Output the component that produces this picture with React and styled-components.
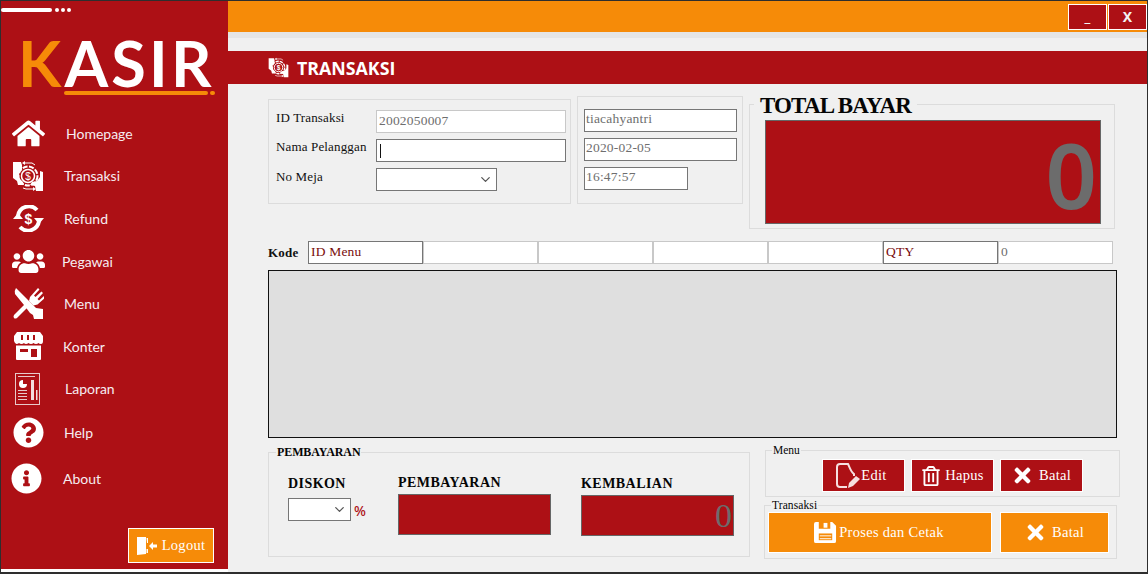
import styled, { createGlobalStyle } from "styled-components";
import { FaHome, FaUsers, FaQuestionCircle, FaInfoCircle, FaTimes, FaRegTrashAlt } from "react-icons/fa";
import { FiChevronDown } from "react-icons/fi";

const RED = "#ad1015";
const ORANGE = "#f68b08";
const SERIF = `"Liberation Serif", serif`;

const GlobalStyle = createGlobalStyle`
  html, body { margin: 0; padding: 0; background: #2e2e2e; }
  * { box-sizing: border-box; }
  input:focus { outline: none; }
`;

const Frame = styled.div`
  width: 1148px;
  height: 574px;
  padding: 1px 1px 2px 1px;
  display: flex;
  background: #2e2e2e;
  overflow: hidden;
  font-family: ${SERIF};
`;

const Sidebar = styled.aside`
  width: 227px;
  flex: none;
  background: #fff;
`;

const SideInner = styled.div`
  height: 568px;
  background: ${RED};
  display: flex;
  flex-direction: column;
`;

const Dots = styled.div`
  display: flex;
  align-items: center;
  gap: 2px;
  height: 4px;
  margin-top: 7px;
  i {
    display: block;
    width: 4px;
    height: 4px;
    border-radius: 50%;
    background: #fff;
  }
  b {
    display: block;
    width: 51px;
    height: 4px;
    border-radius: 2px;
    background: #fff;
    margin-right: 1px;
  }
`;

const Logo = styled.div`
  margin: 20px 0 0 17px;
  height: 58px;
  font-family: Lato, sans-serif;
  font-size: 63px;
  line-height: 62px;
  font-weight: 700;
  color: #fff;
  letter-spacing: 3.2px;
  white-space: nowrap;
  span {
    color: ${ORANGE};
  }
`;

const LogoRule = styled.div`
  display: flex;
  align-items: center;
  gap: 2px;
  margin-left: 63px;
  height: 5px;
  u {
    display: block;
    width: 144px;
    height: 4px;
    border-radius: 2px;
    background: ${ORANGE};
  }
  i {
    display: block;
    width: 5px;
    height: 4px;
    border-radius: 2px;
    background: ${ORANGE};
  }
`;

const Nav = styled.nav`
  margin-top: 17px;
  display: flex;
  flex-direction: column;
`;

const NavItem = styled.div`
  height: ${(p) => p.$h}px;
  display: flex;
  align-items: center;
  color: #f6ecf1;
  font-family: Lato, sans-serif;
  font-size: 14px;
  white-space: nowrap;
`;

const NavLabel = styled.span`
  margin-left: ${(p) => p.$gap}px;
`;

const NavIcon = styled.div`
  width: ${(p) => p.$w}px;
  margin-left: 9px;
  flex: none;
  display: flex;
  justify-content: center;
  svg {
    display: block;
  }
`;

const LogoutButton = styled.button`
  align-self: flex-end;
  margin: auto 14px 6px 0;
  width: 86px;
  height: 35px;
  background: ${ORANGE};
  border: 1px solid #fff;
  color: #fff;
  font-family: ${SERIF};
  font-size: 14.5px;
  letter-spacing: 0.3px;
  display: flex;
  align-items: center;
  justify-content: center;
  gap: 5px;
  padding: 0;
`;

const Main = styled.main`
  flex: 1;
  background: #f0f0f0;
  display: flex;
  flex-direction: column;
`;

const TopBar = styled.div`
  height: 31px;
  background: ${ORANGE};
  display: flex;
  justify-content: flex-end;
  gap: 1px;
  padding-top: 3px;
`;

const WinButton = styled.button`
  width: 39px;
  height: 26px;
  background: ${RED};
  border: 1px solid #fff;
  color: #f3f3f3;
  font-family: "Noto Sans", sans-serif;
  font-weight: 700;
  font-size: 14px;
  line-height: 22px;
  padding: 0;
`;

const Shade = styled.div`
  height: 6px;
  background: #e5e5e5;
`;

const Header = styled.header`
  margin-top: 13px;
  height: 33px;
  background: ${RED};
  color: #fff;
  font-family: "Open Sans", sans-serif;
  font-weight: 700;
  font-size: 17.8px;
  display: flex;
  align-items: center;
  padding-left: 40px;
  gap: 8px;
`;

const Content = styled.div`
  padding: 12px 0 0 40px;
  display: flex;
  flex-direction: column;
`;

const TopRow = styled.section`
  height: 133px;
  display: flex;
  align-items: flex-start;
  gap: 6px;
`;

const Panel = styled.div`
  width: ${(p) => p.$w}px;
  height: ${(p) => p.$h}px;
  margin-top: ${(p) => p.$top || 0}px;
  border: 1px solid #dcdcdc;
  padding: ${(p) => p.$pad};
  display: flex;
  flex-direction: column;
  gap: 6px;
`;

const FormRow = styled.div`
  display: flex;
  align-items: flex-start;
  height: 23px;
`;

const Label = styled.label`
  width: 100px;
  flex: none;
  font-size: 13px;
  letter-spacing: 0.15px;
  line-height: 15px;
  color: #111;
  margin-top: ${(p) => p.$top || 0}px;
  white-space: nowrap;
`;

const Field = styled.input`
  display: block;
  flex: none;
  width: ${(p) => p.$w}px;
  height: 23px;
  background: #fff;
  border: 1px solid ${(p) => (p.$soft ? "#c8c8c8" : "#767676")};
  border-radius: 0;
  font-family: ${SERIF};
  font-size: 13.5px;
  letter-spacing: 0.2px;
  color: ${(p) => p.$color || "#6e6e6e"};
  padding: 0 0 ${(p) => p.$lift ?? 3}px ${(p) => p.$left || 2}px;
`;

const CaretField = styled(Field)`
  background: linear-gradient(#111, #111) no-repeat 3px 4px / 1px 14px #fff;
`;

const SelectBox = styled.div`
  width: ${(p) => p.$w}px;
  height: 23px;
  flex: none;
  background: #fff;
  border: 1px solid #767676;
  display: flex;
  align-items: center;
  justify-content: flex-end;
  padding-right: 3px;
  color: #555;
`;

const Group = styled.fieldset`
  margin: ${(p) => p.$margin || 0};
  width: ${(p) => p.$w}px;
  height: ${(p) => p.$h}px;
  min-width: 0;
  border: 1px solid #dcdcdc;
  padding: ${(p) => p.$pad || 0};
  flex: none;
`;

const GroupTitle = styled.legend`
  position: relative;
  top: ${(p) => p.$drop || 0}px;
  font-size: ${(p) => p.$size}px;
  font-weight: ${(p) => p.$weight || 700};
  line-height: ${(p) => p.$line}px;
  color: #050505;
  margin-left: ${(p) => p.$left}px;
  padding: 0 ${(p) => p.$gap || 0}px;
  letter-spacing: ${(p) => p.$track || 0}px;
  white-space: nowrap;
`;

const TotalDisplay = styled.output`
  display: flex;
  justify-content: flex-end;
  align-items: center;
  width: 336px;
  height: 104px;
  background: ${RED};
  border: 1px solid #666;
  color: #6c6c6c;
  font-family: "Noto Sans", sans-serif;
  font-weight: 600;
  font-size: 90px;
  line-height: 100px;
  padding: 4px 3px 0 0;
`;

const CodeRow = styled.section`
  margin-top: 12px;
  height: 23px;
  display: flex;
  align-items: center;
`;

const CodeLabel = styled.label`
  width: 40px;
  flex: none;
  font-weight: 700;
  font-size: 13px;
  letter-spacing: 0.2px;
  color: #111;
`;

const TableBox = styled.div`
  margin-top: 6px;
  width: 849px;
  height: 168px;
  background: #dfdfdf;
  border: 1px solid #111;
`;

const BottomRow = styled.section`
  margin-top: 7px;
  display: flex;
  gap: 15px;
`;

const PayColumns = styled.div`
  display: flex;
`;

const PayColumn = styled.div`
  width: ${(p) => p.$w}px;
  flex: none;
  display: flex;
  flex-direction: column;
`;

const PayLabel = styled.div`
  height: 16px;
  font-size: 14px;
  font-weight: 700;
  letter-spacing: 0.45px;
  line-height: 16px;
  color: #050505;
  margin-top: ${(p) => p.$top || 0}px;
  white-space: nowrap;
`;

const DiscountRow = styled.div`
  margin-top: 6px;
  display: flex;
  align-items: center;
  gap: 3px;
`;

const Percent = styled.span`
  color: ${RED};
  font-family: "Noto Sans", sans-serif;
  font-size: 14px;
  font-weight: 500;
  position: relative;
  top: 1px;
`;

const PayBox = styled.output`
  display: flex;
  justify-content: flex-end;
  align-items: center;
  margin-top: 3px;
  width: 153px;
  height: 41px;
  background: ${RED};
  border: 1px solid #666;
  color: #6c6c6c;
  font-family: ${SERIF};
  font-size: 34px;
  padding-right: 1px;
`;

const SideGroups = styled.div`
  display: flex;
  flex-direction: column;
`;

const ButtonRow = styled.div`
  display: flex;
  gap: ${(p) => p.$gap}px;
`;

const ActionButton = styled.button`
  width: ${(p) => p.$w}px;
  height: ${(p) => p.$h}px;
  background: ${(p) => (p.$orange ? ORANGE : RED)};
  border: 1px solid #fff;
  color: #fff;
  font-family: ${SERIF};
  font-size: 14.5px;
  letter-spacing: 0.3px;
  display: flex;
  align-items: center;
  justify-content: center;
  gap: ${(p) => p.$iconGap || 3}px;
  padding: 0 ${(p) => p.$shift || 0}px 0 0;
  svg {
    flex: none;
  }
`;

const TransferIcon = ({ size = 32 }) => (
  <svg width={size} height={size} viewBox="0 0 32 32" fill="none">
    <path d="M1 2h8l1 3v4l-3 4v5l4 4 1 3H6l-1-4-4-3z" fill="#fff" />
    <path d="M31 31h-7l-1-5-5-1 2-3 5-1 3-4v-6l3 1z" fill="#fff" />
    <circle cx="16" cy="16" r="9.500" stroke="#fff" strokeWidth="2" strokeDasharray="5 1.500" />
    <circle cx="16" cy="16" r="6.500" stroke="#fff" strokeWidth="1.500" />
    <text x="16" y="19.500" textAnchor="middle" fontFamily="Liberation Sans" fontSize="10" fill="#fff">$</text>
    <path d="M12 3h8l3 2M21 29h-7l-3-1" stroke="#fff" strokeWidth="1" />
    <path d="M13 1v4l-3-2zM21 31v-4l3 2z" fill="#fff" />
  </svg>
);

const RefundIcon = () => (
  <svg width="31" height="27" viewBox="0 0 31 27" fill="none">
    <path d="M5 11a11 11 0 0 1 19-6" stroke="#fff" strokeWidth="4" />
    <path d="M26 16a11 11 0 0 1-19 6" stroke="#fff" strokeWidth="4" />
    <path d="M0 14l5-6 5 6zM31 13l-5 6-5-6z" fill="#fff" />
    <text x="15.500" y="18.500" textAnchor="middle" fontFamily="Liberation Sans" fontWeight="700" fontSize="14" fill="#fff">$</text>
  </svg>
);

const CutleryIcon = () => (
  <svg width="31" height="31" viewBox="0 0 31 31" fill="#fff">
    <path d="M3 0l20 20 7 1v10h-9l-1-4-3-2-6-8-9-11q-1-3 1-6z" />
    <path d="M1 27l12-12 3 3L4 30q-2 1-3 0-1-1 0-3z" />
    <path d="M16 13l1-4 8-9 1.500 1.500-5.500 6 1.500 1.500 6-5.500 1.500 1.500-5.500 6 1.500 1.500 6-5.500 1.500 1.500-9 8-4 1z" />
  </svg>
);

const StoreIcon = () => (
  <svg width="29" height="28" viewBox="0 0 29 28" fill="#fff">
    <path d="M3 0h23l3 4v5q0 3-2 3t-2.500-1q-1 1-2.500 1t-2.500-1q-1 1-2.500 1t-2.500-1q-1 1-2.500 1T10 11q-1 1-2.500 1T5 11q-1 1-2.500 1T0 9V4z" />
    <path d="M7 3h2v5H7zM13 3h2v5h-2zM19 3h2v5h-2z" fill="#ad1015" />
    <path fillRule="evenodd" d="M2 13.500h25V27a1 1 0 0 1-1 1H3a1 1 0 0 1-1-1zM6 17v3h8v-3zM17 17v8h6v-8z" />
  </svg>
);

const ReportIcon = () => (
  <svg width="26" height="32" viewBox="0 0 26 32" fill="none">
    <rect x="0.500" y="0.500" width="24" height="31" stroke="#e8c9c9" />
    <path d="M3 3h17v1H3z" fill="#e8c9c9" />
    <circle cx="8" cy="11" r="4" fill="#fff" />
    <path d="M8 11V6h5v5z" fill="#ad1015" />
    <path d="M16 7h3v20h-3zM21 17h1.500v10H21z" fill="#f2dede" />
    <path d="M3 17h9v1H3zM3 20h9v1H3zM3 23h9v1H3zM3 26h9v1H3z" fill="#e8c9c9" />
  </svg>
);

const DoorIcon = () => (
  <svg width="20" height="20" viewBox="0 0 20 20" fill="#fff">
    <path d="M0 1h9v17L0 19z" />
    <path d="M9.500 2h1.500v5h-1zM9.500 13h1.500v4h-1.500z" />
    <path d="M12 10l4-4v2.500h4v3h-4V14z" />
  </svg>
);

const EditIcon = () => (
  <svg width="25" height="27" viewBox="0 0 25 27" fill="none">
    <path d="M12 25H5a3 3 0 0 1-3-3V5a3 3 0 0 1 3-3h8c2 4 3 8 6 10v2" stroke="#f6dfe0" strokeWidth="2" />
    <path d="M13 26l1-5 7-7 4 3-7 7z" fill="#f6dfe0" />
  </svg>
);

const SaveIcon = () => (
  <svg width="23" height="23" viewBox="0 0 24 24" fill="#fff">
    <path d="M2 1h3v7h12V1h2l4 4v16a2 2 0 0 1-2 2H2a2 2 0 0 1-2-2V3a2 2 0 0 1 2-2z" />
    <rect x="10" y="2" width="4" height="5" />
    <rect x="5" y="13" width="14" height="7" fill="#f68b08" />
    <rect x="6" y="15" width="12" height="1" />
    <rect x="6" y="18" width="12" height="1" />
  </svg>
);

const navItems = [
  { label: "Homepage", h: 42, w: 36, gap: 20, icon: <FaHome size={33} color="#fff" /> },
  { label: "Transaksi", h: 43, w: 36, gap: 18, icon: <TransferIcon /> },
  { label: "Refund", h: 43, w: 36, gap: 18, icon: <RefundIcon /> },
  { label: "Pegawai", h: 42, w: 36, gap: 16, icon: <FaUsers size={33} color="#fff" /> },
  { label: "Menu", h: 43, w: 36, gap: 18, icon: <CutleryIcon /> },
  { label: "Konter", h: 42, w: 36, gap: 17, icon: <StoreIcon /> },
  { label: "Laporan", h: 43, w: 36, gap: 19, icon: <ReportIcon /> },
  { label: "Help", h: 45, w: 36, gap: 18, icon: <FaQuestionCircle size={31} color="#fff" /> },
  { label: "About", h: 46, w: 32, gap: 21, icon: <FaInfoCircle size={31} color="#fff" /> },
];

export default function App() {
  return (
    <>
      <GlobalStyle />
      <Frame>
        <Sidebar>
          <SideInner>
            <Dots>
              <b />
              <i />
              <i />
              <i />
            </Dots>
            <Logo>
              <span>K</span>ASIR
            </Logo>
            <LogoRule>
              <u />
              <i />
            </LogoRule>
            <Nav>
              {navItems.map((item) => (
                <NavItem key={item.label} $h={item.h}>
                  <NavIcon $w={item.w}>{item.icon}</NavIcon>
                  <NavLabel $gap={item.gap}>{item.label}</NavLabel>
                </NavItem>
              ))}
            </Nav>
            <LogoutButton>
              <DoorIcon />
              Logout
            </LogoutButton>
          </SideInner>
        </Sidebar>
        <Main>
          <TopBar>
            <WinButton>_</WinButton>
            <WinButton>X</WinButton>
          </TopBar>
          <Shade />
          <Header>
            <TransferIcon size={21} />
            TRANSAKSI
          </Header>
          <Content>
            <TopRow>
              <Panel $w={303} $h={105} $top={3} $pad="10px 0 0 7px">
                <FormRow>
                  <Label>ID Transaksi</Label>
                  <Field $w={190} $soft $lift={1} readOnly value="2002050007" />
                </FormRow>
                <FormRow>
                  <Label>Nama Pelanggan</Label>
                  <CaretField $w={190} readOnly value="" />
                </FormRow>
                <FormRow>
                  <Label $top={1}>No Meja</Label>
                  <SelectBox $w={121}>
                    <FiChevronDown size={15} />
                  </SelectBox>
                </FormRow>
              </Panel>
              <Panel $w={166} $h={108} $pad="12px 0 0 6px">
                <Field $w={153} $left={1} readOnly value="tiacahyantri" />
                <Field $w={153} $left={1} readOnly value="2020-02-05" />
                <Field $w={104} $left={1} readOnly value="16:47:57" />
              </Panel>
              <Group $w={366} $h={137} $margin="-4px 0 0 0" $pad="4px 0 0 15px">
                <GroupTitle $size={23} $line={24} $left={-11} $gap={6} $track={-0.85} $drop={2}>
                  TOTAL BAYAR
                </GroupTitle>
                <TotalDisplay>0</TotalDisplay>
              </Group>
            </TopRow>
            <CodeRow>
              <CodeLabel>Kode</CodeLabel>
              <Field $w={115} $color="#7a0c0c" $lift={1} readOnly value="ID Menu" />
              <Field $w={115} $soft readOnly value="" />
              <Field $w={115} $soft readOnly value="" />
              <Field $w={115} $soft readOnly value="" />
              <Field $w={115} $soft readOnly value="" />
              <Field $w={115} $color="#7a0c0c" $lift={1} readOnly value="QTY" />
              <Field $w={115} $soft $lift={1} readOnly value="0" />
            </CodeRow>
            <TableBox />
            <BottomRow>
              <Group $w={482} $h={112} $pad="11px 0 0 19px">
                <GroupTitle $size={12} $line={14} $left={-12} $gap={1} $track={-0.1}>
                  PEMBAYARAN
                </GroupTitle>
                <PayColumns>
                  <PayColumn $w={110}>
                    <PayLabel $top={6}>DISKON</PayLabel>
                    <DiscountRow>
                      <SelectBox $w={63}>
                        <FiChevronDown size={15} />
                      </SelectBox>
                      <Percent>%</Percent>
                    </DiscountRow>
                  </PayColumn>
                  <PayColumn $w={183}>
                    <PayLabel $top={5}>PEMBAYARAN</PayLabel>
                    <PayBox />
                  </PayColumn>
                  <PayColumn $w={153}>
                    <PayLabel $top={6}>KEMBALIAN</PayLabel>
                    <PayBox>0</PayBox>
                  </PayColumn>
                </PayColumns>
              </Group>
              <SideGroups>
                <Group $w={355} $h={52} $pad="4px 0 0 56px">
                  <GroupTitle $size={11.500} $line={10} $left={-50} $gap={1} $weight={400}>
                    Menu
                  </GroupTitle>
                  <ButtonRow $gap={6}>
                    <ActionButton $w={83} $h={33} $iconGap={1} $shift={5}>
                      <EditIcon />
                      Edit
                    </ActionButton>
                    <ActionButton $w={83} $h={33} $iconGap={4}>
                      <FaRegTrashAlt size={20} />
                      Hapus
                    </ActionButton>
                    <ActionButton $w={83} $h={33} $iconGap={5} $shift={1}>
                      <FaTimes size={23} />
                      Batal
                    </ActionButton>
                  </ButtonRow>
                </Group>
                <Group $w={353} $h={60} $margin="2px 0 0 -1px" $pad="1px 0 0 3px">
                  <GroupTitle $size={11.500} $line={12} $left={3} $gap={1} $weight={400} $track={0.1}>
                    Transaksi
                  </GroupTitle>
                  <ButtonRow $gap={8}>
                    <ActionButton $w={224} $h={41} $orange $iconGap={2} $shift={2}>
                      <SaveIcon />
                      Proses dan Cetak
                    </ActionButton>
                    <ActionButton $w={109} $h={41} $orange $iconGap={5} $shift={1}>
                      <FaTimes size={23} />
                      Batal
                    </ActionButton>
                  </ButtonRow>
                </Group>
              </SideGroups>
            </BottomRow>
          </Content>
        </Main>
      </Frame>
    </>
  );
}
